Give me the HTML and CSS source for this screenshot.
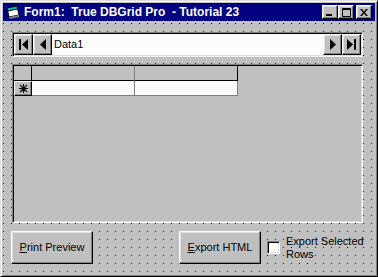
FILE: index.html
```html
<html>
<head>
	<link rel="stylesheet" href="styles.css">
</head>

<body>
	<div class="window">
		<div class="titlebar">
			<svg class="app-icon" width="16" height="16" viewBox="0 0 16 16">
				<path d="M2 4 L12 2 L14 11 L4 13 Z" fill="#fff" stroke="#000" stroke-width="1"/>
				<path d="M2 4 L12 2 L12.6 5 L2.6 7 Z" fill="#00c0c0" stroke="#000" stroke-width="1"/>
				<path d="M4 13 L14 11 L14.4 13 L4.6 15 Z" fill="#808080"/>
			</svg>
			<span class="title">Form1:  True DBGrid Pro  - Tutorial 23</span>
			<div class="caption-buttons">
				<div class="cap-btn">
					<svg width="8" height="7" viewBox="0 0 8 7"><rect x="0" y="5" width="6" height="2" fill="#000"/></svg>
				</div>
				<div class="cap-btn">
					<svg width="9" height="9" viewBox="0 0 9 9"><path d="M0.5 0.5 H8.5 V8.5 H0.5 Z M0.5 1.5 H8.5" fill="none" stroke="#000" stroke-width="1"/></svg>
				</div>
				<div class="cap-btn close">
					<svg width="8" height="7" viewBox="0 0 8 7"><path d="M0 0 L2 0 L4 2.5 L6 0 L8 0 L5 3.5 L8 7 L6 7 L4 4.5 L2 7 L0 7 L3 3.5 Z" fill="#000"/></svg>
				</div>
			</div>
		</div>

		<div class="client">
			<div class="data-control">
				<div class="nav-btn">
					<svg width="9" height="11" viewBox="0 0 9 11"><rect x="0" y="0" width="2" height="11" fill="#000"/><path d="M9 0 V11 L3 5.5 Z" fill="#000"/></svg>
				</div>
				<div class="nav-btn">
					<svg width="6" height="11" viewBox="0 0 6 11"><path d="M6 0 V11 L0 5.5 Z" fill="#000"/></svg>
				</div>
				<div class="data-caption">Data1</div>
				<div class="nav-btn">
					<svg width="6" height="11" viewBox="0 0 6 11"><path d="M0 0 V11 L6 5.5 Z" fill="#000"/></svg>
				</div>
				<div class="nav-btn">
					<svg width="9" height="11" viewBox="0 0 9 11"><path d="M0 0 V11 L6 5.5 Z" fill="#000"/><rect x="7" y="0" width="2" height="11" fill="#000"/></svg>
				</div>
			</div>

			<div class="dbgrid">
				<div class="grid-row grid-head">
					<div class="cell selector"></div>
					<div class="cell col"></div>
					<div class="cell col last"></div>
				</div>
				<div class="grid-row grid-new">
					<div class="cell selector">
						<svg width="9" height="9" viewBox="0 0 9 9">
							<path d="M4.5 0 V9 M0 4.5 H9 M1 1 L8 8 M8 1 L1 8" stroke="#000" stroke-width="1.2"/>
						</svg>
					</div>
					<div class="cell col"></div>
					<div class="cell col last"></div>
				</div>
			</div>

			<div class="actions">
				<div class="btn"><span><u>P</u>rint Preview</span></div>
				<div class="btn export"><span><u>E</u>xport HTML</span></div>
				<div class="check">
					<span class="check-box"></span>
					<span class="check-label">Export Selected<br>Rows</span>
				</div>
			</div>
		</div>
	</div>
</body>

</html>
```

FILE: styles.css
```css
body {
	margin: 0;
	padding: 0;
	background: #c0c0c0;
	font-family: 'Liberation Sans', Arial, sans-serif;
	font-size: 11px;
	color: #000;
	overflow: hidden;
}

.window {
	width: 378px;
	height: 277px;
	box-sizing: border-box;
	padding: 2px;
	background: #c0c0c0;
	border: 1px solid;
	border-color: #dfdfdf #000 #000 #dfdfdf;
	box-shadow: inset 1px 1px #fff, inset -1px -1px #808080;
}

/* caption bar */
.titlebar {
	height: 18px;
	margin-bottom: 1px;
	background: #000080;
	color: #fff;
	display: flex;
	align-items: center;
	padding: 0 3px 0 2px;
}

.app-icon {
	flex: none;
	margin-right: 3px;
}

.title {
	font-weight: bold;
	font-size: 12px;
	white-space: pre;
	flex: 1;
}

.caption-buttons {
	display: flex;
	align-items: center;
}

.cap-btn {
	width: 16px;
	height: 14px;
	box-sizing: border-box;
	background: #c0c0c0;
	border: 1px solid;
	border-color: #fff #000 #000 #fff;
	box-shadow: inset -1px -1px #808080, inset 1px 1px #dfdfdf;
	display: flex;
	align-items: center;
	justify-content: center;
}

.cap-btn.close {
	margin-left: 2px;
}

/* form area with design grid dots */
.client {
	height: 252px;
	box-sizing: border-box;
	padding-top: 10px;
	background-color: #c0c0c0;
	background-image: conic-gradient(at 1px 1px, transparent 270deg, #000 0);
	background-size: 8px 8px;
	background-position: 0 1px;
}

/* data control */
.data-control {
	margin-left: 9px;
	width: 351px;
	height: 25px;
	box-sizing: border-box;
	border: 1px solid;
	border-color: #808080 #fff #fff #808080;
	box-shadow: inset 1px 1px #000, inset -1px -1px #dfdfdf;
	padding: 1px;
	display: flex;
	background: #fcfcfc;
}

.nav-btn {
	width: 19px;
	height: 21px;
	box-sizing: border-box;
	background: #c0c0c0;
	border: 1px solid;
	border-color: #fff #000 #000 #fff;
	box-shadow: inset -1px -1px #808080, inset 1px 1px #dfdfdf;
	display: flex;
	align-items: center;
	justify-content: center;
	flex: none;
}

.data-caption {
	flex: 1;
	padding-left: 2px;
	line-height: 21px;
	font-size: 11px;
}

/* true dbgrid */
.dbgrid {
	margin: 7px 0 0 9px;
	width: 351px;
	height: 159px;
	box-sizing: border-box;
	border: 1px solid;
	border-color: #808080 #fff #fff #808080;
	box-shadow: inset 1px 1px #000, inset -1px -1px #dfdfdf;
	padding: 1px;
	background: #c0c0c0;
}

.grid-row {
	display: flex;
	height: 15px;
}

.cell {
	box-sizing: border-box;
	height: 15px;
}

.selector {
	width: 18px;
	border-right: 1px solid #000;
}

.col {
	width: 103px;
	border-right: 1px solid #808080;
}

.col.last {
	border-right-color: #000;
}

.grid-head .cell {
	border-bottom: 1px solid #000;
	background: #c0c0c0;
}

.grid-new .col {
	background: #fcfcfc;
	border-bottom: 1px solid #808080;
	border-right-color: #808080;
}

.grid-new .selector {
	border: 1px solid;
	border-color: #fff #000 #000 #fff;
	box-shadow: inset -1px -1px #808080;
	display: flex;
	align-items: center;
	justify-content: center;
	background: #c0c0c0;
}

/* bottom buttons */
.actions {
	display: flex;
	align-items: center;
	margin: 8px 0 0 8px;
	height: 33px;
}

.btn {
	width: 82px;
	height: 33px;
	box-sizing: border-box;
	background: #c0c0c0;
	border: 1px solid;
	border-color: #fff #000 #000 #fff;
	box-shadow: inset -1px -1px #808080, inset 1px 1px #dfdfdf;
	display: flex;
	align-items: center;
	justify-content: center;
	font-size: 11px;
	padding-bottom: 2px;
}

.btn.export {
	margin-left: 86px;
}

.check {
	display: flex;
	align-items: center;
	margin-left: 6px;
}

.check-box {
	width: 13px;
	height: 13px;
	box-sizing: border-box;
	background: #fff;
	border: 1px solid;
	border-color: #808080 #fff #fff #808080;
	box-shadow: inset 1px 1px #000, inset -1px -1px #dfdfdf;
	flex: none;
}

.check-label {
	margin-left: 6px;
	line-height: 13px;
	font-size: 11px;
	white-space: nowrap;
}
```
